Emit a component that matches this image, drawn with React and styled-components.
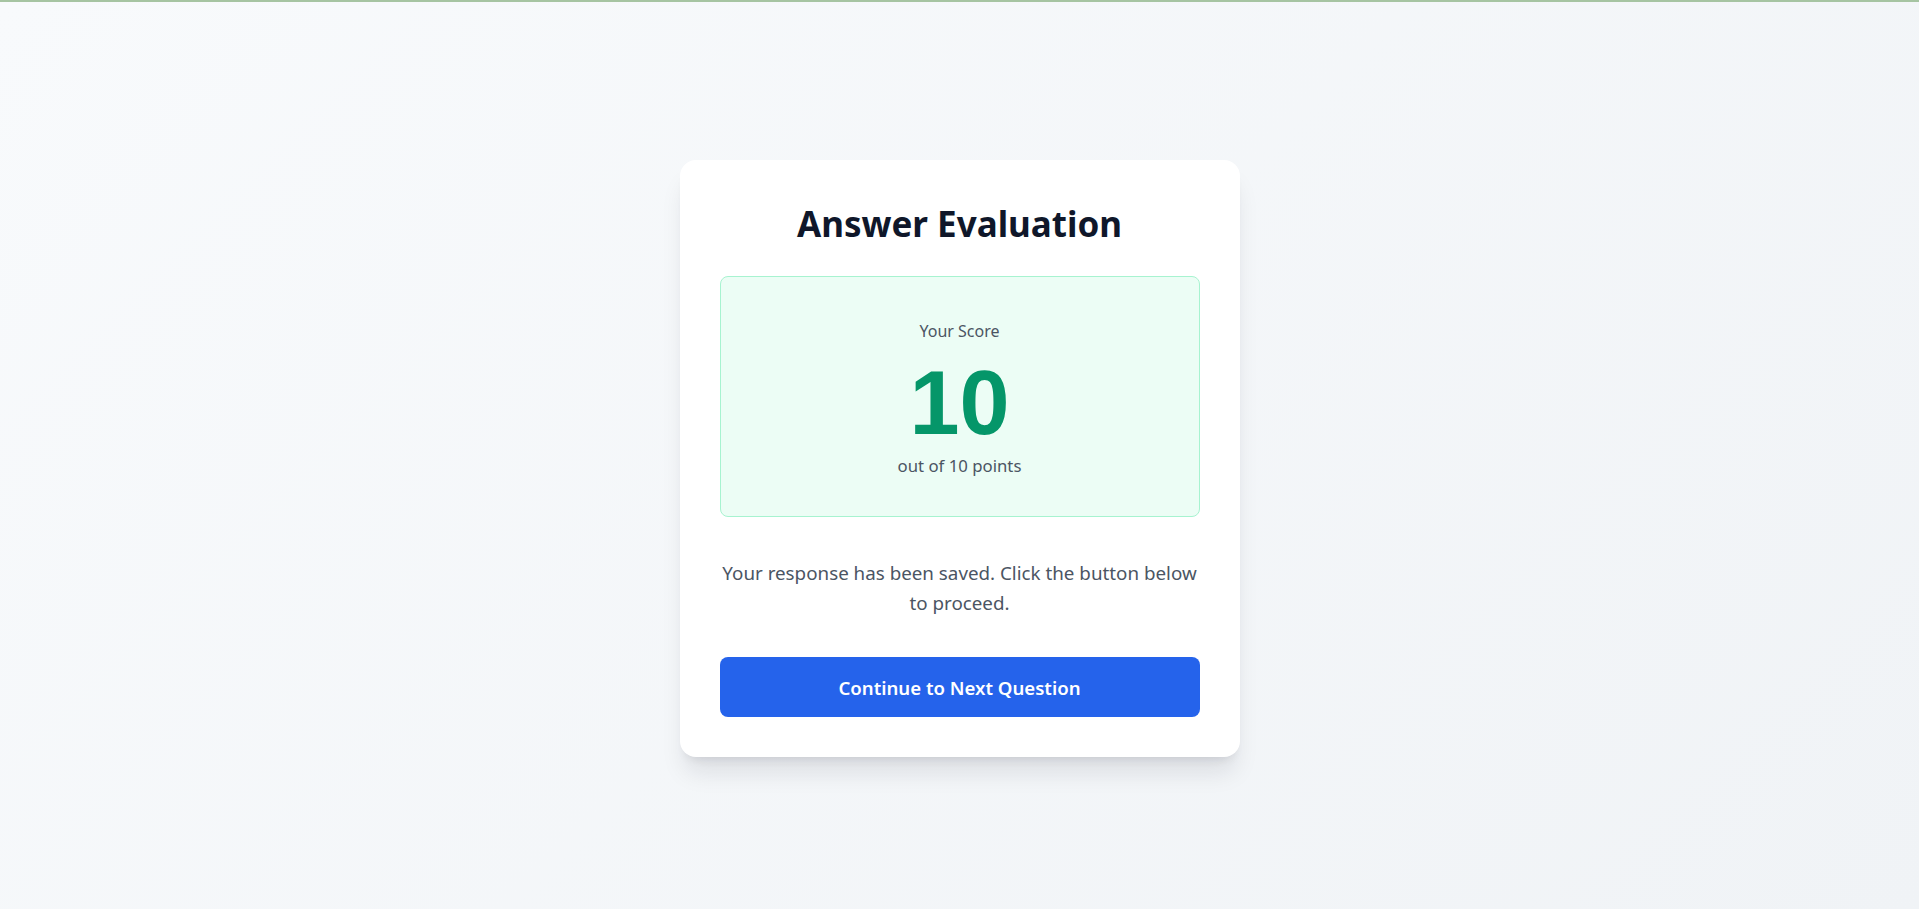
import React from "react";
import styled, { createGlobalStyle } from "styled-components";

const GlobalStyle = createGlobalStyle`
  * {
    box-sizing: border-box;
  }

  body {
    margin: 0;
    font-family: "Noto Sans", "Open Sans", sans-serif;
  }
`;

const Page = styled.div`
  min-height: 100vh;
  display: flex;
  flex-direction: column;
  background: linear-gradient(135deg, #f8fafc 0%, #f0f3f6 100%);
`;

const TopLine = styled.div`
  height: 2px;
  background: #a6c4a2;
`;

const Center = styled.div`
  flex: 1;
  display: flex;
  justify-content: center;
  align-items: center;
  padding: 30px 24px 24px;
`;

const Card = styled.div`
  width: 560px;
  padding: 40px;
  background: #ffffff;
  border-radius: 16px;
  box-shadow: 0 20px 25px -5px rgba(15, 23, 42, 0.1),
    0 8px 10px -6px rgba(15, 23, 42, 0.1);
  text-align: center;
`;

const Title = styled.h1`
  margin: 4px 0 32px;
  font-size: 35px;
  line-height: 40px;
  font-weight: 700;
  color: #0f172a;
`;

const ScoreBox = styled.div`
  display: flex;
  flex-direction: column;
  align-items: center;
  padding: 42px 24px 38px;
  background: #ecfdf5;
  border: 1px solid #a7f3d0;
  border-radius: 8px;
`;

const ScoreLabel = styled.div`
  font-size: 16px;
  line-height: 24px;
  color: #4b5563;
`;

const ScoreValue = styled.div`
  margin: 15px 0 6px;
  font-family: "Liberation Sans", Arial, sans-serif;
  font-size: 90px;
  line-height: 1;
  font-weight: 700;
  color: #059669;
`;

const ScoreTotal = styled.div`
  font-size: 16.75px;
  line-height: 24px;
  color: #4b5563;
`;

const Message = styled.p`
  margin: 41px 0 39px;
  font-size: 18.8px;
  line-height: 30px;
  color: #4b5563;
`;

const Button = styled.button`
  display: block;
  width: 100%;
  height: 60px;
  border: none;
  border-radius: 8px;
  background: #2563eb;
  color: #ffffff;
  font-family: inherit;
  font-size: 18.6px;
  font-weight: 600;
  cursor: pointer;
  transition: background 0.2s ease;

  &:hover {
    background: #1d4ed8;
  }
`;

export default function App() {
  return (
    <>
      <GlobalStyle />
      <Page>
        <TopLine />
        <Center>
          <Card>
            <Title>Answer Evaluation</Title>
            <ScoreBox>
              <ScoreLabel>Your Score</ScoreLabel>
              <ScoreValue>10</ScoreValue>
              <ScoreTotal>out of 10 points</ScoreTotal>
            </ScoreBox>
            <Message>
              Your response has been saved. Click the button below to proceed.
            </Message>
            <Button>Continue to Next Question</Button>
          </Card>
        </Center>
      </Page>
    </>
  );
}
